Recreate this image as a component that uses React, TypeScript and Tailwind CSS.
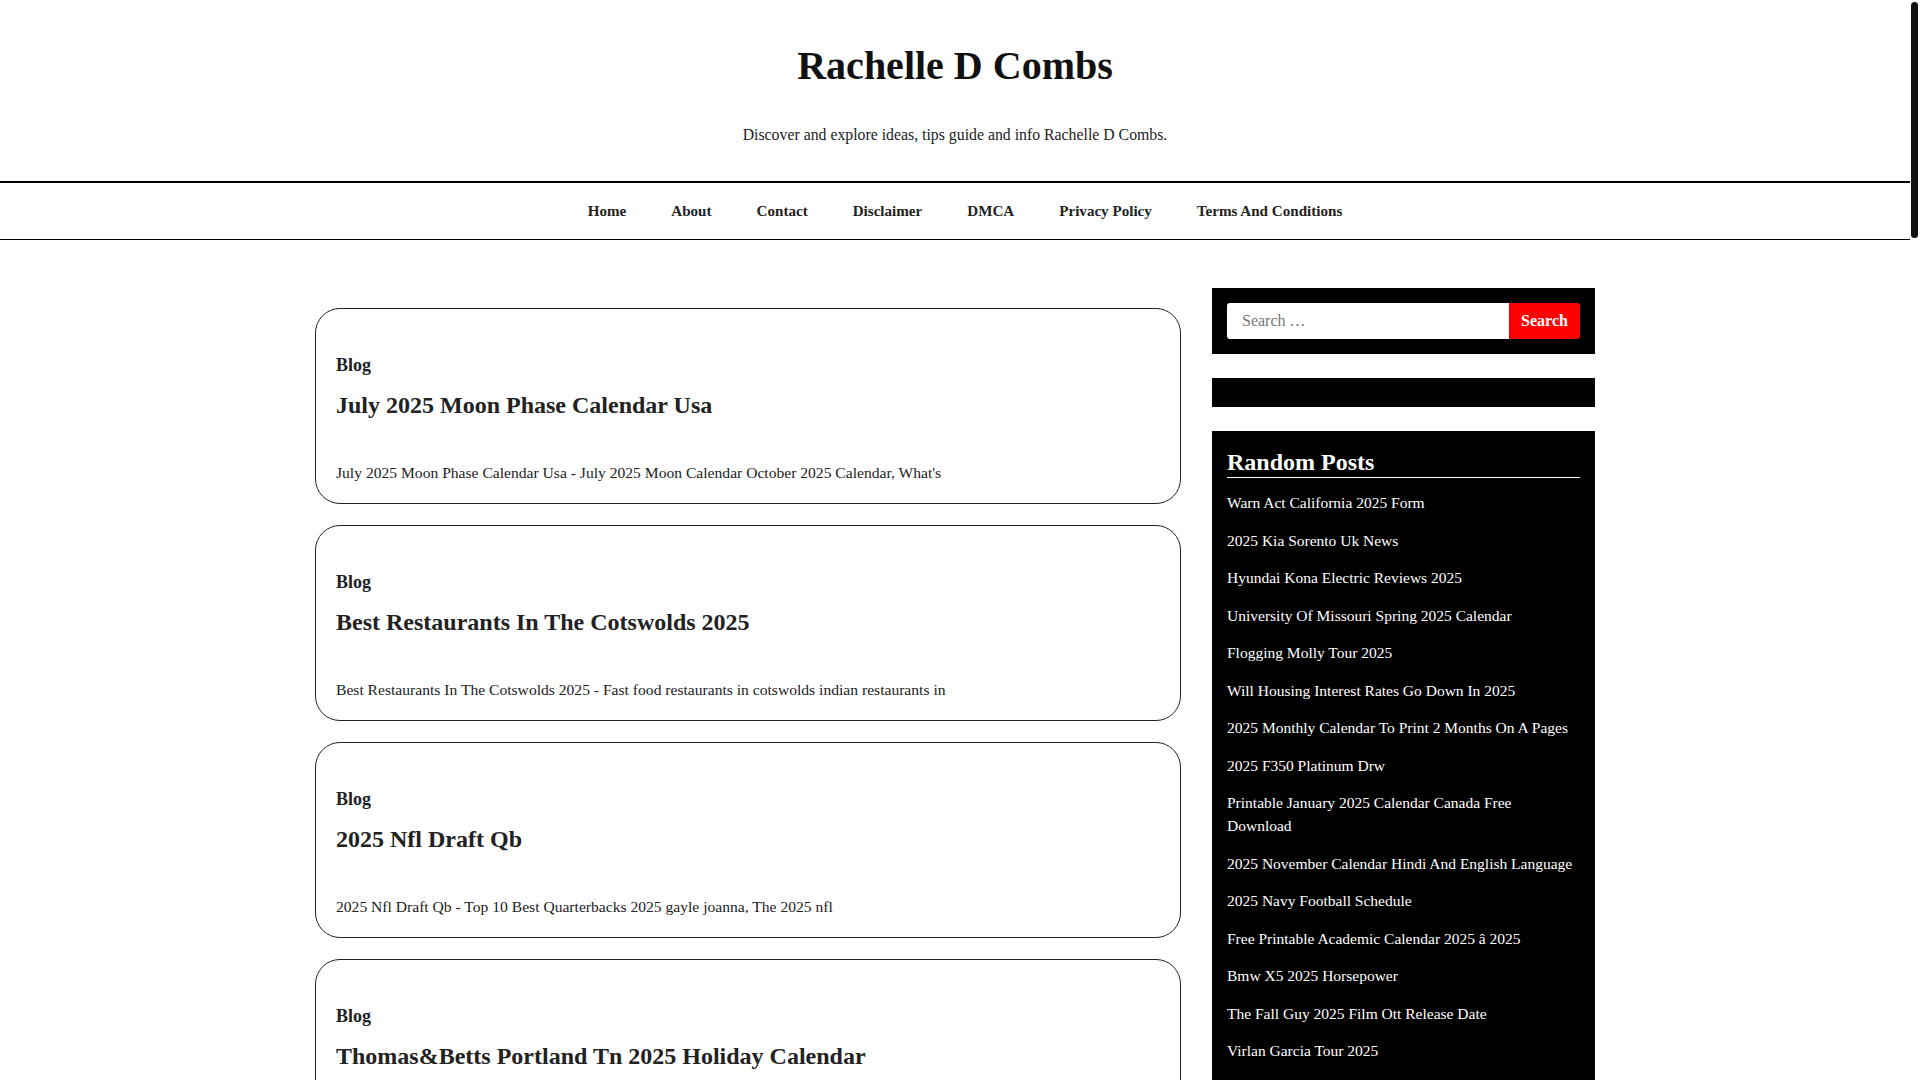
import React from 'react';

interface Post {
  title: string;
  excerpt: string;
}

const POSTS: Post[] = [
  {
    title: 'July 2025 Moon Phase Calendar Usa',
    excerpt: "July 2025 Moon Phase Calendar Usa - July 2025 Moon Calendar October 2025 Calendar, What's",
  },
  {
    title: 'Best Restaurants In The Cotswolds 2025',
    excerpt: 'Best Restaurants In The Cotswolds 2025 - Fast food restaurants in cotswolds indian restaurants in',
  },
  {
    title: '2025 Nfl Draft Qb',
    excerpt: '2025 Nfl Draft Qb - Top 10 Best Quarterbacks 2025 gayle joanna, The 2025 nfl',
  },
  {
    title: 'Thomas&Betts Portland Tn 2025 Holiday Calendar',
    excerpt: 'Thomas&Betts Portland Tn 2025 Holiday Calendar - Thomas & Betts Holiday Schedule 2025',
  },
  {
    title: 'Warn Act California 2025 Form',
    excerpt: 'Warn Act California 2025 Form - California WARN Act Changes for 2025, What employers need',
  },
  {
    title: '2025 Kia Sorento Uk News',
    excerpt: '2025 Kia Sorento Uk News - 2025 Kia Sorento Review, Pricing, and Specs, New Kia Sorento',
  },
  {
    title: 'Hyundai Kona Electric Reviews 2025',
    excerpt: 'Hyundai Kona Electric Reviews 2025 - 2025 Hyundai Kona Electric Review, Pricing and Specs',
  },
  {
    title: 'University Of Missouri Spring 2025 Calendar',
    excerpt: 'University Of Missouri Spring 2025 Calendar - Mizzou Academic Calendar 2025 Important Dates',
  },
  {
    title: 'Flogging Molly Tour 2025',
    excerpt: 'Flogging Molly Tour 2025 - Flogging Molly Announce 2025 Tour Dates, Tickets and Venues',
  },
  {
    title: 'Will Housing Interest Rates Go Down In 2025',
    excerpt: 'Will Housing Interest Rates Go Down In 2025 - Mortgage Rate Forecast 2025, Will rates drop',
  },
  {
    title: '2025 Monthly Calendar To Print 2 Months On A Pages',
    excerpt: '2025 Monthly Calendar To Print 2 Months On A Pages - Free Printable Two Month Calendar 2025',
  },
  {
    title: '2025 F350 Platinum Drw',
    excerpt: '2025 F350 Platinum Drw - 2025 Ford Super Duty F 350 Platinum Dually Review and Price',
  },
  {
    title: 'Printable January 2025 Calendar Canada Free Download',
    excerpt: 'Printable January 2025 Calendar Canada Free Download - January 2025 Calendar With Holidays',
  },
  {
    title: '2025 November Calendar Hindi And English Language',
    excerpt: '2025 November Calendar Hindi And English Language - Hindu Calendar November 2025 Festivals',
  },
  {
    title: '2025 Navy Football Schedule',
    excerpt: '2025 Navy Football Schedule - Navy Midshipmen 2025 Football Schedule, Dates and Opponents',
  },
  {
    title: 'Free Printable Academic Calendar 2025 â 2025',
    excerpt: 'Free Printable Academic Calendar 2025 â 2025 - School Year Calendar Templates 2025 2026',
  },
  {
    title: 'Bmw X5 2025 Horsepower',
    excerpt: 'Bmw X5 2025 Horsepower - 2025 BMW X5 Specs, Engine Options and Performance Figures',
  },
  {
    title: 'The Fall Guy 2025 Film Ott Release Date',
    excerpt: 'The Fall Guy 2025 Film Ott Release Date - The Fall Guy Streaming Date Announced, Where',
  },
  {
    title: 'Virlan Garcia Tour 2025',
    excerpt: 'Virlan Garcia Tour 2025 - Virlan Garcia Announces 2025 Tour Dates and Ticket Sale',
  },
  {
    title: 'Chinese New Year 2025 Animal Meaning',
    excerpt: 'Chinese New Year 2025 Animal Meaning - Year of the Snake 2025, What It Means for You',
  },
];

const NAV = ['Home', 'About', 'Contact', 'Disclaimer', 'DMCA', 'Privacy Policy', 'Terms And Conditions'];

const RANDOM = [
  'Warn Act California 2025 Form',
  '2025 Kia Sorento Uk News',
  'Hyundai Kona Electric Reviews 2025',
  'University Of Missouri Spring 2025 Calendar',
  'Flogging Molly Tour 2025',
  'Will Housing Interest Rates Go Down In 2025',
  '2025 Monthly Calendar To Print 2 Months On A Pages',
  '2025 F350 Platinum Drw',
  'Printable January 2025 Calendar Canada Free Download',
  '2025 November Calendar Hindi And English Language',
  '2025 Navy Football Schedule',
  'Free Printable Academic Calendar 2025 â 2025',
  'Bmw X5 2025 Horsepower',
  'The Fall Guy 2025 Film Ott Release Date',
  'Virlan Garcia Tour 2025',
  'Chinese New Year 2025 Animal Meaning',
  'Mlb Opening Day 2025 Tickets',
  '2025 Toyota Tacoma Trd Pro Colors',
];

function PostCard({ post }: { post: Post }) {
  return (
    <article className="border border-[#222] rounded-[25px] px-5 pt-[44px] pb-[18px] text-[#222]">
      <a className="block text-[18px] font-bold leading-[24px]">Blog</a>
      <h2 className="mt-[12px] text-[24px] font-bold leading-[32px]">{post.title}</h2>
      <p className="mt-[40px] text-[15.6px] leading-[24px]">{post.excerpt}</p>
    </article>
  );
}

export default function App() {
  return (
    <div className="flex h-screen bg-white text-[#111] [font-family:'Liberation_Serif','Times_New_Roman',serif]">
      <div className="flex-1 min-w-0 overflow-y-auto [scrollbar-width:none]">
        <header>
          <div className="flex flex-col items-center pt-[42px] pb-[34px]">
            <h1 className="text-[40px] font-bold leading-[48px] text-[#111]">Rachelle D Combs</h1>
            <p className="mt-[33px] text-[15.8px] leading-[24px] text-[#222]">
              Discover and explore ideas, tips guide and info Rachelle D Combs.
            </p>
          </div>
          <nav className="border-t-2 border-b border-black">
            <ul className="flex justify-center items-center h-[56px] pl-5">
              {NAV.map((item) => (
                <li key={item}>
                  <a className="block px-[22.5px] text-[15.1px] font-bold leading-[24px] text-[#222]">{item}</a>
                </li>
              ))}
            </ul>
          </nav>
        </header>

        <div className="max-w-[1280px] mx-auto flex gap-[31px] pt-[48px] pb-16">
          <main className="flex-1 flex flex-col gap-[21px] pt-[20px]">
            {POSTS.map((p) => (
              <PostCard key={p.title} post={p} />
            ))}
          </main>

          <aside className="w-[383px] shrink-0 flex flex-col gap-[24px]">
            <div className="bg-black p-[15px]">
              <form className="flex h-[36px]" onSubmit={(e) => e.preventDefault()}>
                <input
                  type="search"
                  placeholder="Search …"
                  className="flex-1 min-w-0 bg-white rounded-l-[3px] px-[15px] text-[16px] text-[#333] placeholder:text-[#777] outline-none [font-family:'Liberation_Serif',serif]"
                />
                <button
                  type="submit"
                  className="w-[71px] bg-[#ff0000] text-white text-[16px] font-bold rounded-r-[3px]"
                >
                  Search
                </button>
              </form>
            </div>

            <div className="bg-black h-[29px]" />

            <div className="bg-black px-[15px] pt-[17px] pb-[20px] text-white">
              <h2 className="text-[24px] font-bold leading-[28px] pb-[1px] border-b border-white">Random Posts</h2>
              <ul className="mt-[13px] pr-[3px] flex flex-col gap-[14.5px]">
                {RANDOM.map((r) => (
                  <li key={r} className="text-[15.5px] leading-[23px]">
                    <a>{r}</a>
                  </li>
                ))}
              </ul>
            </div>
          </aside>
        </div>
      </div>

      {/* scrollbar strip */}
      <div className="w-[10px] shrink-0 bg-white">
        <div className="mt-[2px] ml-[1px] w-[7px] h-[236px] rounded-full bg-[#111]" />
      </div>
    </div>
  );
}
